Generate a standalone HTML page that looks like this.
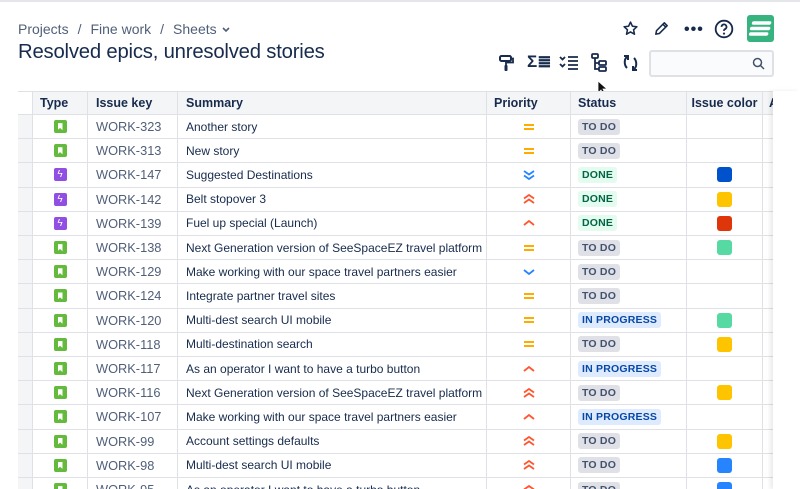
<!DOCTYPE html>
<html><head><meta charset="utf-8"><style>
*{box-sizing:border-box;margin:0;padding:0}
body{width:800px;height:489px;overflow:hidden;background:#fff;font-family:"Liberation Sans",sans-serif;color:#172B4D;position:relative}
.top{position:absolute;left:0;top:0;width:800px;height:2px;background:#e4e6ea}
.bc{position:absolute;left:18px;top:21px;font-size:14px;color:#505F79}
.bc span{margin:0 9px}
h1{position:absolute;left:18px;top:41px;font-size:20.3px;font-weight:normal;color:#172B4D;letter-spacing:-.2px}
.ic{position:absolute}
.search{position:absolute;left:649px;top:50px;width:125px;height:27px;border:2px solid #DFE1E6;border-radius:3px;background:#FAFBFC}
.logo{position:absolute;left:747px;top:15px;width:27px;height:27px;background:#36B37E;border-radius:3px}
.tbl{position:absolute;left:18px;top:91px;width:755px;height:398px;overflow:hidden}
.row{position:absolute;left:0;height:24.2px;width:800px;border-bottom:1px solid #DFE1E6;font-size:12px;white-space:nowrap}
.row>div{position:absolute;top:0;height:100%;border-right:1px solid #DFE1E6;display:flex;align-items:center;overflow:hidden}
.hd{background:#F4F5F7;font-weight:bold;font-size:12.5px;height:24px!important;border-top:1px solid #DFE1E6}
.c0{left:0;width:15px;background:#F4F5F7}
.c1{left:15px;width:55px;justify-content:center}
.c2{left:70px;width:90px;padding-left:8px;color:#505F79;font-size:12.8px}
.c3{left:160px;width:309px;padding-left:8px}
.c4{left:469px;width:84px;justify-content:center}
.c5{left:553px;width:116px;padding-left:7px}
.c6{left:669px;width:76px;justify-content:center}
.c7{left:745px;width:60px;padding-left:6px}
.hd .c1{justify-content:flex-start;padding-left:7px}
.hd .c4{justify-content:flex-start;padding-left:7px}
.hd .c2{color:#172B4D;font-size:12.5px}
.hd .c0{background:#fff;border-right:1px solid #DFE1E6}
.st{width:13px;height:13px;border-radius:2px;background:#63BA3C;position:relative}
.st:after{content:"";position:absolute;left:4px;top:3px;width:5px;height:7px;background:#fff;clip-path:polygon(0 0,100% 0,100% 100%,50% 70%,0 100%)}
.ep{width:13px;height:13px;border-radius:2px;background:#904EE2;color:#fff;font-size:10px;line-height:13px;text-align:center}
.lz{font-size:10.5px;font-weight:bold;padding:2px 4px;border-radius:3px;letter-spacing:.2px}
.todo{background:#DFE1E6;color:#42526E}
.done{background:#E3FCEF;color:#006644}
.prog{background:#DEEBFF;color:#0747A6}
.sw{width:15px;height:15px;border-radius:3px}
.shadow{position:absolute;left:773px;top:91px;width:27px;height:398px;background:#fff;box-shadow:-3px 0 4px rgba(0,0,0,.08)}
</style></head><body>
<div class="top"></div>
<div class="bc">Projects<span>/</span>Fine work<span>/</span>Sheets <svg width="10" height="8" viewBox="0 0 10 8"><path d="M2 2l3 3 3-3" stroke="#505F79" stroke-width="1.6" fill="none"/></svg></div>
<h1>Resolved epics, unresolved stories</h1>
<svg class="ic" style="left:622px;top:20px" width="17" height="17" viewBox="0 0 24 24"><path d="M12 3l2.7 5.8 6.3.7-4.7 4.3 1.3 6.2L12 16.9 6.4 20l1.3-6.2L3 9.5l6.3-.7z" fill="none" stroke="#172B4D" stroke-width="2.2" stroke-linejoin="round"/></svg>
<svg class="ic" style="left:653px;top:20px" width="17" height="17" viewBox="0 0 24 24"><path d="M4 20l1-5L16 4l4 4L9 19z M14 6l4 4" fill="none" stroke="#172B4D" stroke-width="2.2" stroke-linejoin="round"/></svg>
<div class="ic" style="left:684px;top:21px;font-size:16px;font-weight:bold;letter-spacing:1px">•••</div>
<svg class="ic" style="left:714px;top:19px" width="20" height="20" viewBox="0 0 24 24"><circle cx="12" cy="12" r="10" fill="none" stroke="#172B4D" stroke-width="2.2"/><path d="M9 9.5a3 3 0 1 1 4 2.8c-.8.4-1 1-1 2" fill="none" stroke="#172B4D" stroke-width="2.2"/><circle cx="12" cy="17.5" r="1.3" fill="#172B4D"/></svg>
<div class="logo"><svg width="27" height="27" viewBox="0 0 27 27"><path d="M6 8h16M5 13.5h17M5 19h16" stroke="#fff" stroke-width="3.4" stroke-linecap="round" transform="skewX(-10) translate(2 0)"/></svg></div>
<svg class="ic" style="left:498px;top:54px" width="17" height="18" viewBox="0 0 17 18"><rect x="2" y="2" width="11" height="5" rx="1.5" fill="none" stroke="#172B4D" stroke-width="2"/><path d="M13 4.5h2v4H8v3" fill="none" stroke="#172B4D" stroke-width="1.8"/><rect x="6.5" y="11" width="3" height="6" rx="1" fill="#172B4D"/></svg>
<div class="ic" style="left:527px;top:52px;font-size:17px;font-weight:bold">Σ≣</div>
<svg class="ic" style="left:559px;top:55px" width="20" height="16" viewBox="0 0 20 16"><path d="M1 2l2.5 2.5L6 2M1 9l2.5 2.5L6 9M9 2h10M9 6h10M9 10h10M9 14h10" stroke="#172B4D" stroke-width="1.8" fill="none"/></svg>
<svg class="ic" style="left:591px;top:53px" width="17" height="19" viewBox="0 0 17 19"><rect x="1" y="1" width="6" height="4" rx="1" fill="none" stroke="#172B4D" stroke-width="1.8"/><path d="M4 5v11h4M4 10h4" fill="none" stroke="#172B4D" stroke-width="1.8"/><rect x="8" y="8" width="7" height="4" rx="1" fill="none" stroke="#172B4D" stroke-width="1.8"/><rect x="8" y="14" width="7" height="4" rx="1" fill="none" stroke="#172B4D" stroke-width="1.8"/></svg>
<svg class="ic" style="left:622px;top:54px" width="17" height="18" viewBox="0 0 17 18"><path d="M5 3C2 5 2 11 5 14M12 4c3 3 3 9 0 11" fill="none" stroke="#172B4D" stroke-width="2"/><path d="M2 2h4v4M15 16h-4v-4" fill="none" stroke="#172B4D" stroke-width="2"/></svg>
<div class="search"><svg style="position:absolute;right:7px;top:5px" width="13" height="13" viewBox="0 0 13 13"><circle cx="5.5" cy="5.5" r="4" fill="none" stroke="#42526E" stroke-width="1.5"/><path d="M8.5 8.5l3.5 3.5" stroke="#42526E" stroke-width="1.5"/></svg></div>
<svg class="ic" style="left:597px;top:80px" width="10" height="15" viewBox="0 0 10 15"><path d="M1 1v12l3-3 2 4 2-1-2-4h4z" fill="#111" stroke="#fff" stroke-width=".8"/></svg>
<div class="tbl" id="t"></div>
<div class="shadow"></div>
<script>
var P={m:'<svg width="12" height="8" viewBox="0 0 12 8"><path d="M1 2h10M1 6h10" stroke="#FFAB00" stroke-width="2"/></svg>',
lo:'<svg width="12" height="10" viewBox="0 0 12 10"><path d="M1 1l5 3.5 5-3.5M1 5.5l5 3.5 5-3.5" stroke="#2684FF" stroke-width="1.8" fill="none"/></svg>',
hi:'<svg width="12" height="10" viewBox="0 0 12 10"><path d="M1 4.5l5-3.5 5 3.5M1 9l5-3.5 5 3.5" stroke="#FF5630" stroke-width="1.8" fill="none"/></svg>',
h:'<svg width="12" height="8" viewBox="0 0 12 8"><path d="M1 6l5-4 5 4" stroke="#FF5630" stroke-width="1.8" fill="none"/></svg>',
l:'<svg width="12" height="8" viewBox="0 0 12 8"><path d="M1 2l5 4 5-4" stroke="#2684FF" stroke-width="1.8" fill="none"/></svg>'};
var S={t:'<span class="lz todo">TO DO</span>',d:'<span class="lz done">DONE</span>',p:'<span class="lz prog">IN PROGRESS</span>'};
var R=[['s','323','Another story','m','t',''],['s','313','New story','m','t',''],['e','147','Suggested Destinations','lo','d','#0052CC'],['e','142','Belt stopover 3','hi','d','#FFC400'],['e','139','Fuel up special (Launch)','h','d','#DE350B'],['s','138','Next Generation version of SeeSpaceEZ travel platform','m','t','#57D9A3'],['s','129','Make working with our space travel partners easier','l','t',''],['s','124','Integrate partner travel sites','m','t',''],['s','120','Multi-dest search UI mobile','m','p','#57D9A3'],['s','118','Multi-destination search','m','t','#FFC400'],['s','117','As an operator I want to have a turbo button','h','p',''],['s','116','Next Generation version of SeeSpaceEZ travel platform','hi','t','#FFC400'],['s','107','Make working with our space travel partners easier','h','p',''],['s','99','Account settings defaults','hi','t','#FFC400'],['s','98','Multi-dest search UI mobile','hi','t','#2684FF'],['s','95','As an operator I want to have a turbo button','hi','t','#2684FF']];
var h='<div class="row hd" style="top:0"><div class="c0"></div><div class="c1">Type</div><div class="c2">Issue key</div><div class="c3">Summary</div><div class="c4">Priority</div><div class="c5">Status</div><div class="c6">Issue color</div><div class="c7">A</div></div>';
R.forEach(function(r,i){var y=24+i*24.2;
h+='<div class="row" style="top:'+y+'px"><div class="c0"></div><div class="c1">'+(r[0]=='s'?'<div class="st"></div>':'<div class="ep">ϟ</div>')+'</div><div class="c2">WORK-'+r[1]+'</div><div class="c3">'+r[2]+'</div><div class="c4">'+P[r[3]]+'</div><div class="c5">'+S[r[4]]+'</div><div class="c6">'+(r[5]?'<div class="sw" style="background:'+r[5]+'"></div>':'')+'</div><div class="c7"></div></div>';});
document.getElementById('t').innerHTML=h;
</script>
</body></html>
